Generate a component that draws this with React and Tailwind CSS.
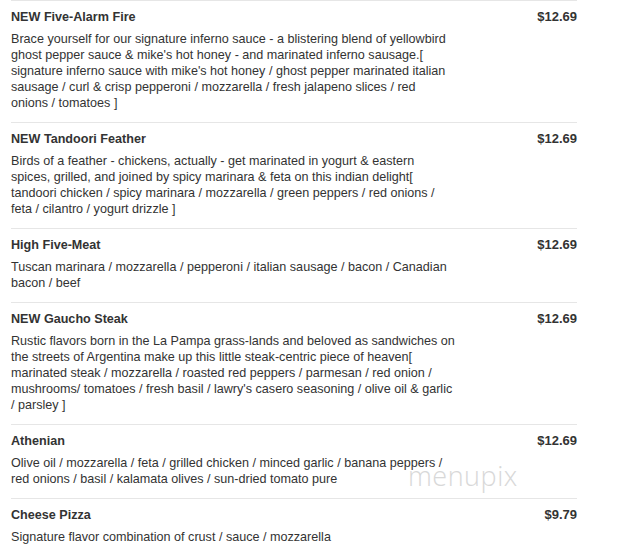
import React from "react";

const items = [
  {
    name: "NEW Five-Alarm Fire",
    price: "$12.69",
    desc: "Brace yourself for our signature inferno sauce - a blistering blend of yellowbird ghost pepper sauce & mike's hot honey - and marinated inferno sausage.[ signature inferno sauce with mike's hot honey / ghost pepper marinated italian sausage / curl & crisp pepperoni / mozzarella / fresh jalapeno slices / red onions / tomatoes ]",
  },
  {
    name: "NEW Tandoori Feather",
    price: "$12.69",
    desc: "Birds of a feather - chickens, actually - get marinated in yogurt & eastern spices, grilled, and joined by spicy marinara & feta on this indian delight[ tandoori chicken / spicy marinara / mozzarella / green peppers / red onions / feta / cilantro / yogurt drizzle ]",
  },
  {
    name: "High Five-Meat",
    price: "$12.69",
    desc: "Tuscan marinara / mozzarella / pepperoni / italian sausage / bacon / Canadian bacon / beef",
  },
  {
    name: "NEW Gaucho Steak",
    price: "$12.69",
    desc: "Rustic flavors born in the La Pampa grass-lands and beloved as sandwiches on the streets of Argentina make up this little steak-centric piece of heaven[ marinated steak / mozzarella / roasted red peppers / parmesan / red onion / mushrooms/ tomatoes / fresh basil / lawry's casero seasoning / olive oil & garlic / parsley ]",
  },
  {
    name: "Athenian",
    price: "$12.69",
    desc: "Olive oil / mozzarella / feta / grilled chicken / minced garlic / banana peppers / red onions / basil / kalamata olives / sun-dried tomato pure",
  },
  {
    name: "Cheese Pizza",
    price: "$9.79",
    desc: "Signature flavor combination of crust / sauce / mozzarella",
  },
];

export default function App() {
  return (
    <div className="relative w-[641px] h-[557px] overflow-hidden bg-white font-['Liberation_Sans',Arial,sans-serif] text-[13px] text-[#333]">
      <div className="ml-[11px] w-[566px]">
        {items.map((it) => (
          <div
            key={it.name}
            className="flex justify-between border-t border-[#e6e6e6] pt-[7px] pb-[11px]"
          >
            <div className="w-[444px]">
              <div className="font-bold text-[12.6px] leading-[18px]">{it.name}</div>
              <div className="mt-[5px] text-[12.6px] leading-[16px]">{it.desc}</div>
            </div>
            <div className="font-bold leading-[18px] text-right">{it.price}</div>
          </div>
        ))}
      </div>
      <div className="pointer-events-none absolute left-[408px] top-[458px] font-['Open_Sans',sans-serif] text-[27px] font-light leading-[36px] tracking-[0.5px] text-[#cfcfcf] opacity-80">
        menupix
      </div>
    </div>
  );
}
